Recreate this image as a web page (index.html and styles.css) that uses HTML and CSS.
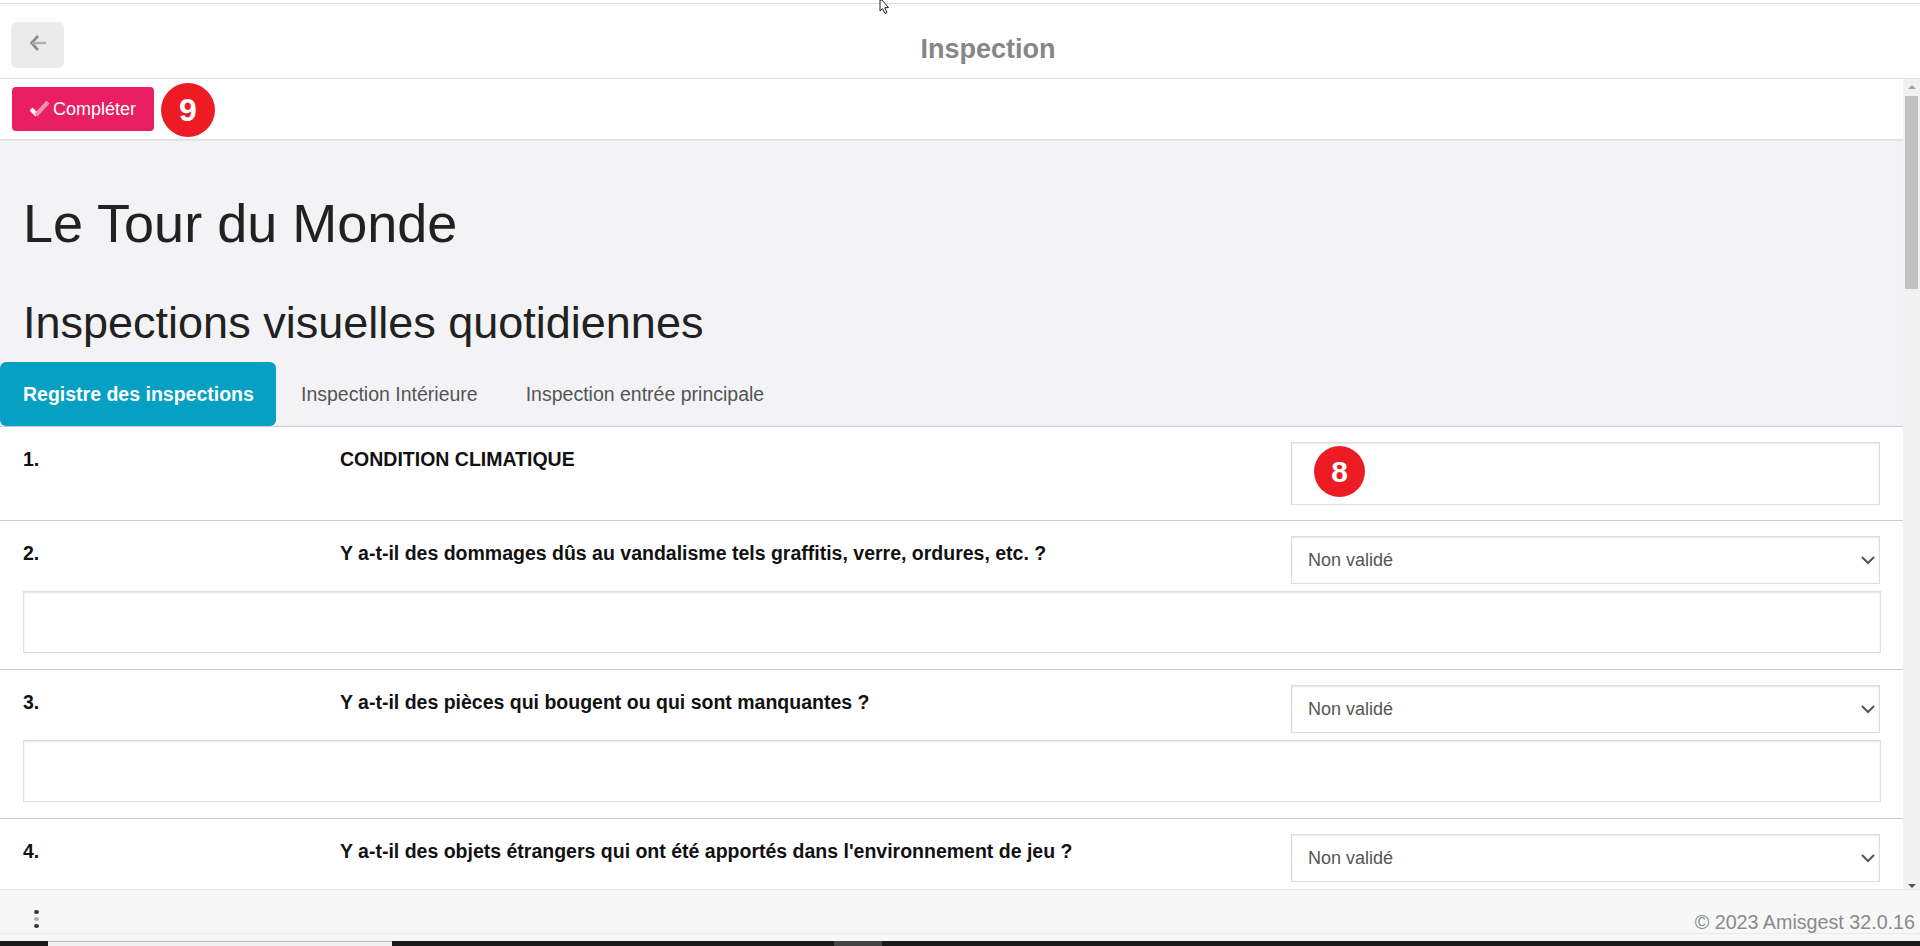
FILE: index.html
```html
<!DOCTYPE html>
<html lang="fr">
<head>
<meta charset="utf-8">
<title>Inspection</title>
<link rel="stylesheet" href="styles.css">
</head>
<body>
<div class="app">
  <div class="topstrip"></div>
  <svg class="cursor" width="13" height="14" viewBox="0 0 13 14"><path d="M1 0 L1 11 L3.6 8.6 L6 13.5 L8 12.5 L5.8 7.8 L9.5 7.5 L3 0 Z" fill="#fff" stroke="#222" stroke-width="1"/></svg>
  <header class="header">
    <button class="back" aria-label="Retour">
      <svg width="18" height="18" viewBox="0 0 18 18"><path d="M9 2 L2.5 9 L9 16" fill="none" stroke="#8a8a8a" stroke-width="2.6"/><path d="M3 9 H17" stroke="#b0b0b0" stroke-width="2.4"/></svg>
    </button>
    <h1 class="header-title">Inspection</h1>
  </header>
  <div class="middle">
    <main class="scroller">
      <div class="toolbar">
        <button class="complete">
          <svg width="20" height="16" viewBox="0 0 20 16"><path d="M1 8 L7 14" stroke="#fff" stroke-width="4.2" fill="none"/><path d="M6 14 L18 1" stroke="#f48fb1" stroke-width="4.2" fill="none"/></svg>
          Compléter
        </button>
        <span class="badge badge-nine">9</span>
      </div>
      <div class="content">
        <h1 class="title">Le Tour du Monde</h1>
        <h2 class="subtitle">Inspections visuelles quotidiennes</h2>
        <nav class="tabs">
          <a class="tab active">Registre des inspections</a>
          <a class="tab">Inspection Intérieure</a>
          <a class="tab">Inspection entrée principale</a>
        </nav>
      </div>
      <section class="list">
        <div class="row first">
          <div class="row-grid">
            <div class="num">1.</div>
            <div class="question">CONDITION CLIMATIQUE</div>
            <div class="control">
              <input class="field tall" type="text">
              <span class="badge badge-eight">8</span>
            </div>
          </div>
        </div>
        <div class="row">
          <div class="row-grid">
            <div class="num">2.</div>
            <div class="question">Y a-t-il des dommages dûs au vandalisme tels graffitis, verre, ordures, etc. ?</div>
            <div class="control">
              <div class="select">Non validé<svg width="16" height="10" viewBox="0 0 16 10"><path d="M2 2 L8 8 L14 2" fill="none" stroke="#555" stroke-width="2"/></svg></div>
            </div>
          </div>
          <textarea class="field note"></textarea>
        </div>
        <div class="row">
          <div class="row-grid">
            <div class="num">3.</div>
            <div class="question">Y a-t-il des pièces qui bougent ou qui sont manquantes ?</div>
            <div class="control">
              <div class="select">Non validé<svg width="16" height="10" viewBox="0 0 16 10"><path d="M2 2 L8 8 L14 2" fill="none" stroke="#555" stroke-width="2"/></svg></div>
            </div>
          </div>
          <textarea class="field note"></textarea>
        </div>
        <div class="row">
          <div class="row-grid">
            <div class="num">4.</div>
            <div class="question">Y a-t-il des objets étrangers qui ont été apportés dans l'environnement de jeu ?</div>
            <div class="control">
              <div class="select">Non validé<svg width="16" height="10" viewBox="0 0 16 10"><path d="M2 2 L8 8 L14 2" fill="none" stroke="#555" stroke-width="2"/></svg></div>
            </div>
          </div>
        </div>
      </section>
    </main>
    <div class="scrollbar">
      <span class="arrow up"></span>
      <span class="thumb"></span>
      <span class="arrow down"></span>
    </div>
  </div>
  <footer class="footer">
    <span class="dots"><i></i><i></i><i></i></span>
    <span class="copyright">© 2023 Amisgest 32.0.16</span>
  </footer>
  <div class="footer-gap"></div>
  <div class="taskbar"><span class="task-white"></span><span class="task-gray"></span></div>
</div>
</body>
</html>
```
FILE: styles.css
```css
* { box-sizing: border-box; }
html, body { margin: 0; height: 100%; overflow: hidden; }
body { font-family: "Liberation Sans", Arial, sans-serif; background: #fff; color: #212121; }
.app { position: relative; display: flex; flex-direction: column; height: 946px; }
.topstrip { height: 4px; background: #fff; border-bottom: 1px solid #ddd; flex: none; }
.cursor { position: absolute; left: 879px; top: 0; z-index: 5; }
.header { position: relative; flex: none; height: 75px; display: flex; align-items: center; justify-content: center; background: #fff; border-bottom: 1px solid #e2e2e2; padding: 17px 0 0 56px; }
.back { position: absolute; left: 11px; top: 18px; width: 53px; height: 46px; border: 0; border-radius: 6px; background: #ebebeb; padding: 0 0 4px 0; display: flex; align-items: center; justify-content: center; }
.header-title { margin: 0; font-size: 27px; font-weight: 700; color: #868686; }
.middle { flex: none; height: 810px; display: flex; overflow: hidden; background: #f1f1f1; }
.scroller { width: 1903px; flex: none; overflow: hidden; background: #f3f3f6; }
.toolbar { height: 61px; padding: 8px 0 0 12px; background: #fff; border-bottom: 1px solid #e0e0e0; box-shadow: 0 1px 1px rgba(0,0,0,.05); display: flex; align-items: flex-start; gap: 7px; }
.complete { width: 142px; height: 44px; border: 0; border-radius: 4px; background: #e91e63; color: #fff; font: 18px "Liberation Sans", Arial, sans-serif; display: flex; align-items: center; justify-content: center; gap: 3px; padding: 0; }
.badge { display: flex; align-items: center; justify-content: center; border-radius: 50%; background: #ed1c24; color: #fff; font-weight: 700; }
.badge-nine { width: 54px; height: 54px; margin-top: -4px; font-size: 32px; }
.content { padding: 0; }
.title { margin: 0; padding: 49px 23px 0; font-size: 54px; line-height: 68px; font-weight: 400; color: #212121; }
.subtitle { margin: 0; padding: 39px 23px 0; font-size: 45px; line-height: 54px; font-weight: 400; color: #212121; }
.tabs { display: flex; margin-top: 12px; height: 64px; }
.tab { display: flex; align-items: center; padding: 0 23px; font-size: 19.5px; color: #555; border-radius: 6px; white-space: nowrap; }
.tab + .tab { padding: 0 24px 0 25px; }
.tab + .tab + .tab { padding-left: 24px; }
.tab.active { width: 276px; flex: none; padding: 0 0 0 23px; background: #05a0c4; color: #fff; font-weight: 700; }
.list { background: #fff; border-top: 1px solid #ccc; }
.row { padding: 15px 23px 16px; border-bottom: 1px solid #ccc; }
.row.first { padding-bottom: 15px; }
.row-grid { display: grid; grid-template-columns: 317px 951px 589px; }
.num, .question { font-size: 19.5px; font-weight: 700; color: #111; padding-top: 4px; line-height: 26px; }
.control { position: relative; }
.field { display: block; width: 100%; border: 1px solid #ddd; background: #fff; box-shadow: inset 0 1px 2px rgba(0,0,0,.1); outline: 0; resize: none; margin: 0; padding: 0; }
.tall { height: 63px; }
.note { height: 62px; margin-top: 7px; width: 1858px; }
.select { height: 48px; border: 1px solid #ddd; box-shadow: inset 0 1px 2px rgba(0,0,0,.1); background: #fff; display: flex; align-items: center; justify-content: space-between; padding: 0 3px 0 16px; font-size: 18px; color: #555; }
.badge-eight { position: absolute; left: 23px; top: 4px; width: 51px; height: 51px; font-size: 30px; }
.scrollbar { flex: 1; display: flex; flex-direction: column; align-items: center; position: relative; background: #f1f1f1; }
.arrow { position: absolute; width: 0; height: 0; border-left: 4px solid transparent; border-right: 4px solid transparent; }
.arrow.up { top: 6px; border-bottom: 4px solid #a0a0a0; }
.arrow.down { bottom: 1px; border-top: 4px solid #505050; }
.thumb { position: absolute; top: 17px; left: 2px; width: 13px; height: 193px; background: #c1c1c1; }
.footer { flex: none; height: 45px; background: #f7f7f7; border-top: 1px solid #e8e8e8; border-bottom: 1px solid #ececec; display: flex; align-items: flex-start; justify-content: space-between; padding: 0 5px 0 34px; }
.dots { display: flex; flex-direction: column; gap: 3px; padding-top: 20px; }
.dots i { width: 5px; height: 4px; border-radius: 50%; background: #333; }
.dots i:nth-child(2) { background: #aaa; }
.copyright { font-size: 19.7px; color: #8a8a8a; padding-top: 21px; }
.footer-gap { flex: none; height: 7px; background: #f7f7f7; }
.taskbar { flex: none; height: 5px; background: #1a1a1a; position: relative; }
.task-white { position: absolute; left: 48px; top: 0; width: 344px; height: 5px; background: #f0f0f0; border-top: 1px solid #bbb; }
.task-gray { position: absolute; left: 834px; top: 0; width: 48px; height: 5px; background: #444; }
```
